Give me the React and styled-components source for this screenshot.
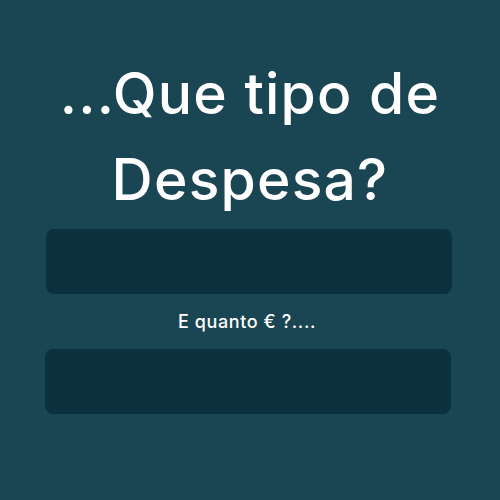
import React from 'react';
import styled, { createGlobalStyle } from 'styled-components';

const GlobalStyle = createGlobalStyle`
  html, body {
    margin: 0;
    padding: 0;
    background: #1a4553;
  }
`;

const Page = styled.div`
  width: 500px;
  height: 500px;
  background: #1a4553;
  display: flex;
  flex-direction: column;
  align-items: flex-start;
  font-family: Inter, "Liberation Sans", sans-serif;
  color: #ffffff;
  box-sizing: border-box;
  padding: 51px 0 0 0;
`;

const Title = styled.h1`
  margin: 0;
  align-self: stretch;
  font-size: 57px;
  font-weight: 500;
  line-height: 86px;
  text-align: center;
  letter-spacing: 1.2px;
`;

const Field = styled.div`
  width: 406px;
  height: 65px;
  border-radius: 8px;
  background: #0c313e;
  margin-left: ${({ left }) => left}px;
`;

const Label = styled.div`
  align-self: stretch;
  text-align: center;
  font-size: 18px;
  font-weight: 500;
  margin: 19px 0 18px;
  padding-right: 6px;
  line-height: 18px;
  letter-spacing: 0.6px;
`;

const App = () => {
  return (
    <Page>
      <GlobalStyle />
      <Title>
        ...Que tipo de
        <br />
        Despesa?
      </Title>
      <Field left={46} style={{ marginTop: '6px' }} />
      <Label>E quanto € ?....</Label>
      <Field left={45} />
    </Page>
  );
};

export default App;
